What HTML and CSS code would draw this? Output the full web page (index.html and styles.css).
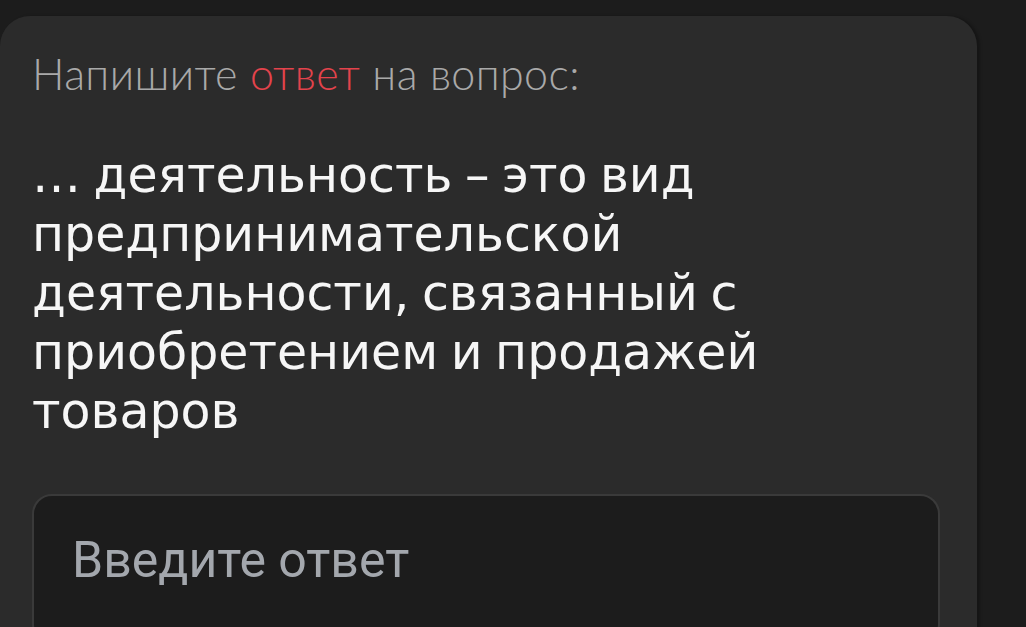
FILE: index.html
```html
<!DOCTYPE html>
<html lang="ru">

<head>
    <meta charset="UTF-8">
    <meta name="viewport" content="width=device-width, initial-scale=1.0">
    <title>Вопрос</title>
    <link rel="stylesheet" href="styles.css">
</head>

<body>
    <div class="card">
        <p class="hint">Напишите <span class="accent">ответ</span> на вопрос:</p>
        <h2 class="question">… деятельность – это вид предпринимательской деятельности, связанный с приобретением и продажей товаров</h2>
        <div class="answer">
            <input type="text" class="answer-input" placeholder="Введите ответ">
        </div>
    </div>
</body>

</html>
```

FILE: styles.css
```css
body {
    margin: 0;
    background-color: #1c1c1c;
    height: 100vh;
    overflow: hidden;
}

.card {
    margin: 16px 49px 0 0;
    padding: 0 37px 0 32px;
    background-color: #2b2b2b;
    border-radius: 30px 30px 0 0;
    box-shadow: 3px 0 3px rgba(0, 0, 0, 0.25);
    height: 700px;
    box-sizing: border-box;
}

.hint {
    margin: 0;
    padding-top: 33px;
    font-family: Lato, sans-serif;
    font-weight: 300;
    font-size: 43px;
    line-height: 50px;
    letter-spacing: 0.4px;
    color: #a9a9a9;
}

.accent {
    color: #e4434c;
}

.question {
    margin: 0;
    padding-top: 47px;
    font-family: "DejaVu Sans", sans-serif;
    font-weight: 400;
    font-size: 49px;
    line-height: 59px;
    word-spacing: -3px;
    color: #f6f6f6;
}

.answer {
    margin-top: 53px;
}

.answer-input {
    display: block;
    width: 100%;
    height: 150px;
    box-sizing: border-box;
    padding: 0 0 18px 38px;
    background-color: #1c1c1c;
    border: 2px solid #3a3a3a;
    border-radius: 20px;
    font-family: Roboto, sans-serif;
    font-size: 50px;
    color: #f0f0f0;
    outline: none;
}

.answer-input::placeholder {
    color: #a3a7ad;
}
```
